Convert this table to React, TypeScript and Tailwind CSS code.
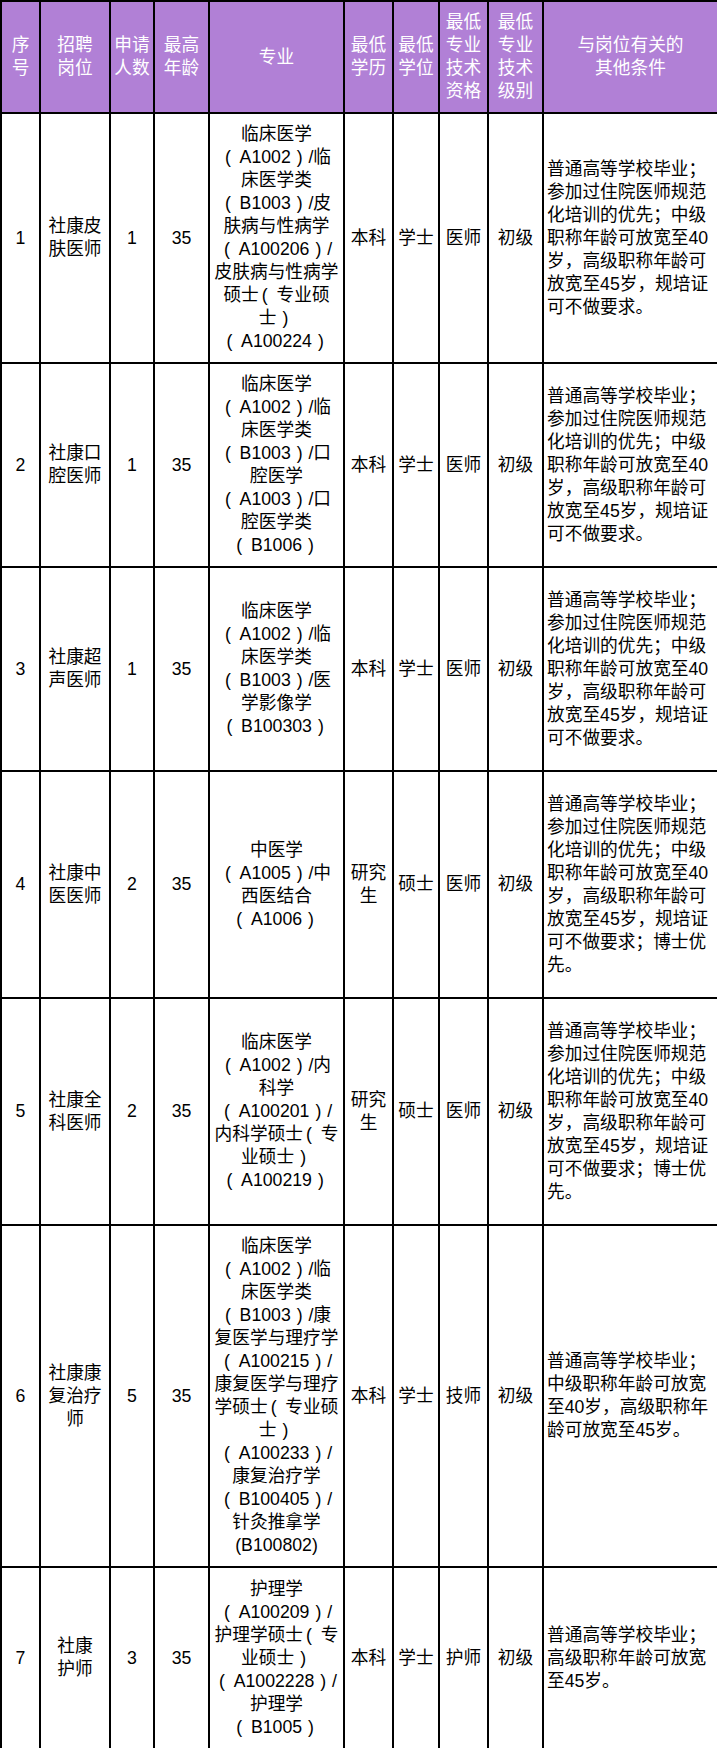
import React from "react";

type Row = {
  no: string;
  post: string[];
  count: string;
  age: string;
  major: string[];
  edu: string[];
  degree: string;
  qual: string;
  level: string;
  notes: string[];
  h: string;
};

const base = [
  "普通高等学校毕业；",
  "参加过住院医师规范",
  "化培训的优先；中级",
  "职称年龄可放宽至40",
  "岁，高级职称年龄可",
  "放宽至45岁，规培证",
];

const rows: Row[] = [
  {
    no: "1",
    post: ["社康皮", "肤医师"],
    count: "1",
    age: "35",
    major: [
      "临床医学",
      "（A1002）/临",
      "床医学类",
      "（B1003）/皮",
      "肤病与性病学",
      "（A100206）/",
      "皮肤病与性病学",
      "硕士（专业硕",
      "士）",
      "（A100224）",
    ],
    edu: ["本科"],
    degree: "学士",
    qual: "医师",
    level: "初级",
    notes: [...base, "可不做要求。"],
    h: "h-[250px]",
  },
  {
    no: "2",
    post: ["社康口", "腔医师"],
    count: "1",
    age: "35",
    major: [
      "临床医学",
      "（A1002）/临",
      "床医学类",
      "（B1003）/口",
      "腔医学",
      "（A1003）/口",
      "腔医学类",
      "（B1006）",
    ],
    edu: ["本科"],
    degree: "学士",
    qual: "医师",
    level: "初级",
    notes: [...base, "可不做要求。"],
    h: "h-[204px]",
  },
  {
    no: "3",
    post: ["社康超", "声医师"],
    count: "1",
    age: "35",
    major: [
      "临床医学",
      "（A1002）/临",
      "床医学类",
      "（B1003）/医",
      "学影像学",
      "（B100303）",
    ],
    edu: ["本科"],
    degree: "学士",
    qual: "医师",
    level: "初级",
    notes: [...base, "可不做要求。"],
    h: "h-[204px]",
  },
  {
    no: "4",
    post: ["社康中", "医医师"],
    count: "2",
    age: "35",
    major: ["中医学", "（A1005）/中", "西医结合", "（A1006）"],
    edu: ["研究", "生"],
    degree: "硕士",
    qual: "医师",
    level: "初级",
    notes: [...base, "可不做要求；博士优", "先。"],
    h: "h-[227px]",
  },
  {
    no: "5",
    post: ["社康全", "科医师"],
    count: "2",
    age: "35",
    major: [
      "临床医学",
      "（A1002）/内",
      "科学",
      "（A100201）/",
      "内科学硕士（专",
      "业硕士）",
      "（A100219）",
    ],
    edu: ["研究", "生"],
    degree: "硕士",
    qual: "医师",
    level: "初级",
    notes: [...base, "可不做要求；博士优", "先。"],
    h: "h-[227px]",
  },
  {
    no: "6",
    post: ["社康康", "复治疗", "师"],
    count: "5",
    age: "35",
    major: [
      "临床医学",
      "（A1002）/临",
      "床医学类",
      "（B1003）/康",
      "复医学与理疗学",
      "（A100215）/",
      "康复医学与理疗",
      "学硕士（专业硕",
      "士）",
      "（A100233）/",
      "康复治疗学",
      "（B100405）/",
      "针灸推拿学",
      "(B100802)",
    ],
    edu: ["本科"],
    degree: "学士",
    qual: "技师",
    level: "初级",
    notes: [
      "普通高等学校毕业；",
      "中级职称年龄可放宽",
      "至40岁，高级职称年",
      "龄可放宽至45岁。",
    ],
    h: "h-[342px]",
  },
  {
    no: "7",
    post: ["社康", "护师"],
    count: "3",
    age: "35",
    major: [
      "护理学",
      "（A100209）/",
      "护理学硕士（专",
      "业硕士）",
      "（A1002228）/",
      "护理学",
      "（B1005）",
    ],
    edu: ["本科"],
    degree: "学士",
    qual: "护师",
    level: "初级",
    notes: ["普通高等学校毕业；", "高级职称年龄可放宽", "至45岁。"],
    h: "h-[182px]",
  },
];

const headers: string[][] = [
  ["序", "号"],
  ["招聘", "岗位"],
  ["申请", "人数"],
  ["最高", "年龄"],
  ["专业"],
  ["最低", "学历"],
  ["最低", "学位"],
  ["最低", "专业", "技术", "资格"],
  ["最低", "专业", "技术", "级别"],
  ["与岗位有关的", "其他条件"],
];

const widths = [
  "w-[39px]",
  "w-[70px]",
  "w-[44px]",
  "w-[55px]",
  "w-[135px]",
  "w-[49px]",
  "w-[46px]",
  "w-[49px]",
  "w-[55px]",
  "w-[175px]",
];

// full-width parens sit roughly centred in their cell in the original
function Major({ text }: { text: string }) {
  const parts = text.split(/([（）])/);
  return (
    <div className="whitespace-nowrap">
      {parts.map((p, i) =>
        p === "（" ? (
          <span key={i} className="inline-block w-[1em] text-left pl-[3px]">
            (
          </span>
        ) : p === "）" ? (
          <span key={i} className="inline-block w-[1em] text-left pl-[6px]">
            )
          </span>
        ) : (
          <span key={i}>{p}</span>
        )
      )}
    </div>
  );
}

function Lines({ items }: { items: string[] }) {
  return (
    <>
      {items.map((t, i) => (
        <div key={i} className="whitespace-nowrap">
          {t}
        </div>
      ))}
    </>
  );
}

const cell = "border-2 border-black align-middle text-center p-0";

export default function App() {
  return (
    <div className="w-[717px] bg-white text-black font-['Liberation_Sans','Noto_Sans_CJK_SC',sans-serif] text-[17.7px] leading-[23px]">
      <table className="w-[717px] table-fixed border-collapse">
        <colgroup>
          {widths.map((w, i) => (
            <col key={i} className={w} />
          ))}
        </colgroup>
        <thead>
          <tr className="h-[112px] bg-[#b180d6] text-white">
            {headers.map((h, i) => (
              <th key={i} className={`${cell} font-normal`}>
                <Lines items={h} />
              </th>
            ))}
          </tr>
        </thead>
        <tbody>
          {rows.map((r) => (
            <tr key={r.no} className={r.h}>
              <td className={cell}>{r.no}</td>
              <td className={cell}>
                <Lines items={r.post} />
              </td>
              <td className={cell}>{r.count}</td>
              <td className={cell}>{r.age}</td>
              <td className={cell}>
                {r.major.map((m, i) => (
                  <Major key={i} text={m} />
                ))}
              </td>
              <td className={cell}>
                <Lines items={r.edu} />
              </td>
              <td className={cell}>{r.degree}</td>
              <td className={cell}>{r.qual}</td>
              <td className={cell}>{r.level}</td>
              <td className="border-2 border-black align-middle text-left pl-[3px] pr-0 py-0">
                <Lines items={r.notes} />
              </td>
            </tr>
          ))}
        </tbody>
      </table>
    </div>
  );
}
